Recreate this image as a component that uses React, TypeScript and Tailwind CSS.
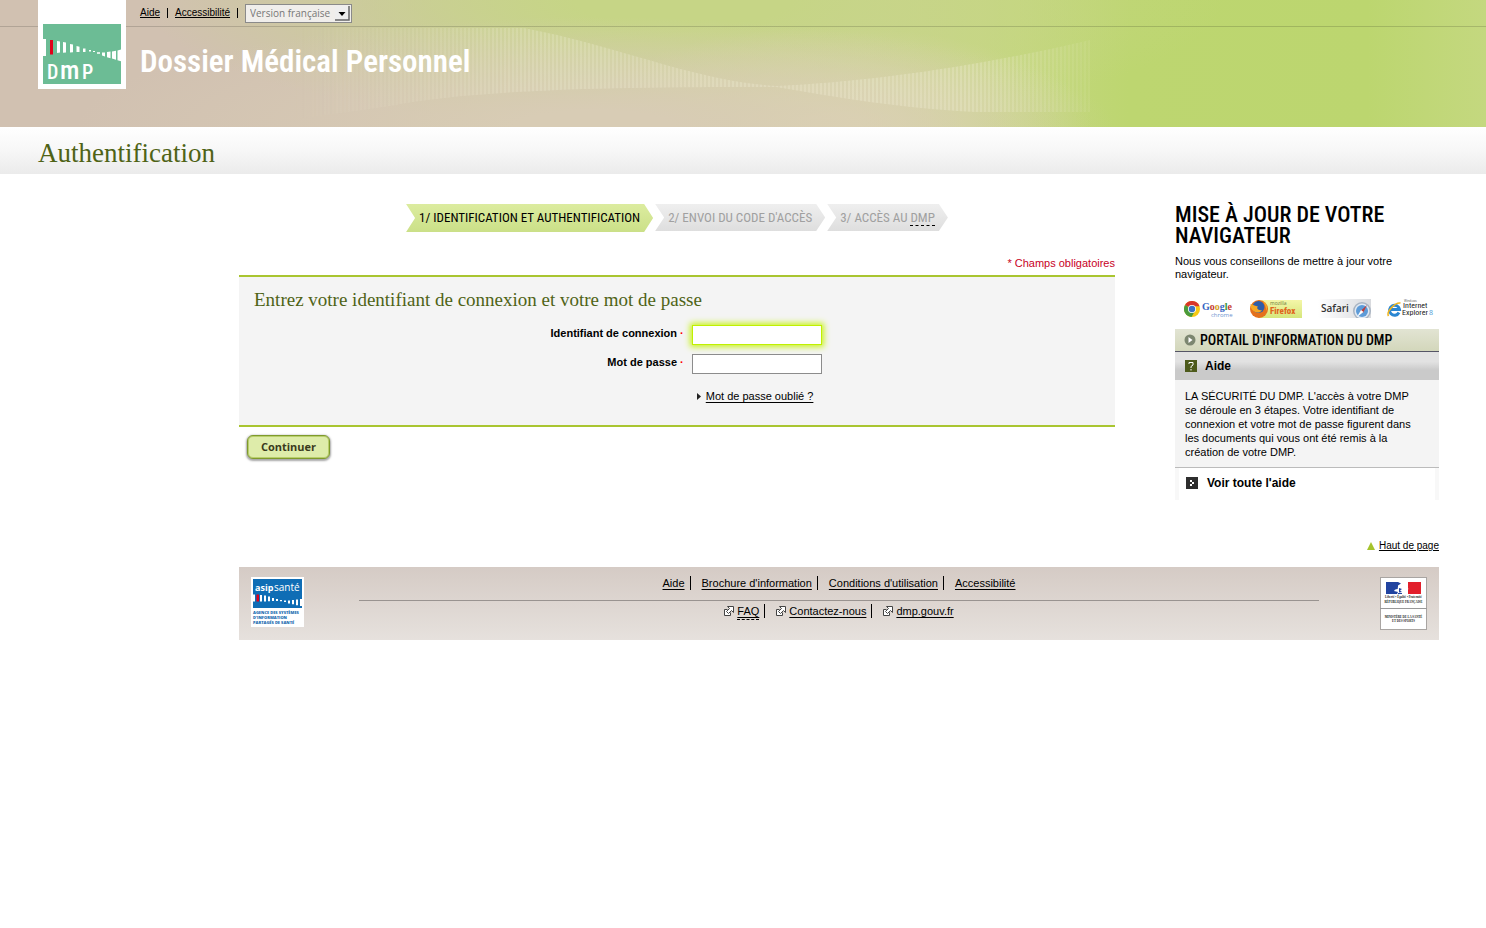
import React, { useState } from 'react';

const steps = [
  { label: '1/ IDENTIFICATION ET AUTHENTIFICATION', active: true },
  { label: "2/ ENVOI DU CODE D'ACCÈS", active: false },
  { label: '3/ ACCÈS AU ', abbr: 'DMP', active: false },
];

const footerLinks = ['Aide', "Brochure d'information", "Conditions d'utilisation", 'Accessibilité'];
const externalLinks = ['FAQ', 'Contactez-nous', 'dmp.gouv.fr'];

const HeaderWave = () => (
  <svg className="absolute inset-y-0 left-0 h-full w-[1100px]" viewBox="0 0 1100 127" aria-hidden="true">
    <defs>
      <pattern id="stripes" width="4" height="127" patternUnits="userSpaceOnUse">
        <rect width="4" height="127" fill="#f6f3dc" fillOpacity="0.3" />
        <rect width="2" height="127" fill="#f6f3dc" fillOpacity="0.7" />
      </pattern>
      <linearGradient id="waveFade" x1="0" x2="1">
        <stop offset="0" stopColor="#fff" stopOpacity="0" />
        <stop offset="0.3" stopColor="#fff" stopOpacity="0.35" />
        <stop offset="0.85" stopColor="#fff" stopOpacity="0.4" />
        <stop offset="1" stopColor="#fff" stopOpacity="0.12" />
      </linearGradient>
      <mask id="waveMask">
        <path
          d="M290 28H524C620 46 690 80 776 86C870 82 980 66 1090 40V112H975C900 108 840 98 776 87C640 87 480 88 390 106C350 112 320 116 290 120Z"
          fill="url(#waveFade)"
        />
      </mask>
    </defs>
    <rect width="1100" height="127" fill="url(#stripes)" mask="url(#waveMask)" />
  </svg>
);

const DmpLogo = () => (
  <svg className="block h-[60px] w-[78px]" viewBox="0 0 78 60" role="img" aria-label="DMP">
    <rect width="78" height="60" fill="#6cbc95" />
    <g fill="#fff">
      <path d="M0 15h3v17H0z" />
      <path d="M14 17l3 .5v11l-3 .5zM20 18l3 .5v10l-3 .3zM27 20l3 .6v7.600l-3 .2zM33.500 22l3 .8v5.200h-3zM40 24.500h2.500V28H40zM46 26h2v1.500h-2zM50 27h2v1h-2zM54 28.200h3v1.600h-3zM59 28.600l3-.2v4l-3-.9zM64 28l3.500-.4v6.600l-3.500-1zM69 27.500l4-.8v9L69 34.600zM74.500 26.400L78 25.500v11.700l-3.500-1z" />
    </g>
    <path d="M7 16h3v14.500H7z" fill="#e2001a" />
    <g fill="#fff" fontFamily="Roboto Condensed, Open Sans, sans-serif" fontWeight="500">
      <text x="4" y="55" fontSize="20">D</text>
      <text x="17" y="55" fontSize="26">m</text>
      <text x="39" y="55" fontSize="20">P</text>
    </g>
  </svg>
);

const ChromeLogo = () => (
  <svg className="h-[20px] w-[50px]" viewBox="0 0 50 20" role="img" aria-label="Google Chrome">
    <circle cx="8" cy="10" r="8" fill="#f6c915" />
    <path d="M8 10L1 6A8 8 0 0 1 15.500 7.200H8z" fill="#d8362a" />
    <path d="M8 10L1 6A8 8 0 0 0 7.500 18l3.500-6z" fill="#4a9b3c" />
    <circle cx="8" cy="10" r="4" fill="#fff" />
    <circle cx="8" cy="10" r="3.200" fill="#3b73c4" />
    <text y="11" fontFamily="Liberation Serif, serif" fontSize="10" fontWeight="700">
      <tspan x="18" fill="#3464c4">G</tspan><tspan fill="#c43a30">o</tspan><tspan fill="#d2a21c">o</tspan><tspan fill="#3464c4">g</tspan><tspan fill="#3c963c">l</tspan><tspan fill="#c43a30">e</tspan>
    </text>
    <text x="27" y="18" fontFamily="Open Sans, sans-serif" fontSize="6" fill="#6f93cf">chrome</text>
  </svg>
);

const FirefoxLogo = () => (
  <svg className="h-[20px] w-[53px]" viewBox="0 0 53 20" role="img" aria-label="Mozilla Firefox">
    <defs>
      <linearGradient id="ffBg" x2="0" y2="1">
        <stop offset="0" stopColor="#f4f6a8" />
        <stop offset="1" stopColor="#d6e67c" />
      </linearGradient>
    </defs>
    <rect x="8" y="1" width="44" height="18" fill="url(#ffBg)" />
    <circle cx="9" cy="10" r="9" fill="#e4701c" />
    <circle cx="8.500" cy="8" r="6" fill="#2f5da8" />
    <path d="M.5 5C4 6 5 7 8 7.500C6 9 8 12 12 11C9 16 3 13 1 9zM12 1.500C17 4 18 8 16.500 12C16 8 15 5 12 1.500z" fill="#f7a823" />
    <text x="20" y="6" fontFamily="Open Sans, sans-serif" fontSize="5" fill="#6c7a3a">mozilla</text>
    <text x="20" y="15" fontFamily="Roboto Condensed, Open Sans, sans-serif" fontSize="9" fontWeight="800" fill="#e0661c">Firefox</text>
  </svg>
);

const SafariLogo = () => (
  <svg className="h-[20px] w-[53px]" viewBox="0 0 53 20" role="img" aria-label="Safari">
    <defs>
      <linearGradient id="sfBg">
        <stop offset="0" stopColor="#fff" />
        <stop offset="1" stopColor="#d8dade" />
      </linearGradient>
      <clipPath id="sfClip"><path d="M0 0h53v19H0z" /></clipPath>
    </defs>
    <rect width="53" height="19" fill="url(#sfBg)" />
    <g clipPath="url(#sfClip)">
      <circle cx="44" cy="12" r="9" fill="#a9b4c2" />
      <circle cx="44" cy="12" r="7.500" fill="#dfe9f4" />
      <circle cx="44" cy="12" r="6" fill="#5d9bd8" />
      <path d="M49 6l-4 8-2.500-2z" fill="#c23b34" />
      <path d="M39 18l4-7 2.500 2z" fill="#fff" />
    </g>
    <text x="3" y="13" fontFamily="Open Sans, sans-serif" fontSize="10" fontWeight="600" fill="#333">Safari</text>
  </svg>
);

const IeLogo = () => (
  <svg className="h-[20px] w-[47px]" viewBox="0 0 47 20" role="img" aria-label="Internet Explorer 8">
    <path d="M12 13.500A5 5 0 1 1 12.500 10.500H4" fill="none" stroke="#2b87d3" strokeWidth="3" />
    <path d="M1.500 17C-1 13 8 3 13.500 4" fill="none" stroke="#f2b51d" strokeWidth="1.500" />
    <text x="17" y="3" fontFamily="Open Sans, sans-serif" fontSize="3" fill="#555">Windows</text>
    <text x="16" y="9" fontFamily="Roboto Condensed, Open Sans, sans-serif" fontSize="8" fill="#222">Internet</text>
    <text x="15" y="16" fontFamily="Roboto Condensed, Open Sans, sans-serif" fontSize="8" fill="#222">Explorer</text>
    <text x="42" y="16" fontFamily="Open Sans, sans-serif" fontSize="7" fill="#4b9bd6">8</text>
  </svg>
);

const AsipLogo = () => (
  <svg className="h-[50px] w-[53px]" viewBox="0 0 53 50" role="img" aria-label="ASIP Santé">
    <rect width="53" height="50" fill="#fff" />
    <rect x="2" y="2" width="49" height="29" fill="#0f6db5" />
    <text x="4" y="14" fontFamily="Open Sans, sans-serif" fontSize="9" fontWeight="700" fill="#fff">asip</text>
    <text x="23" y="14" fontFamily="Open Sans, sans-serif" fontSize="10" fill="#fff">santé</text>
    <path d="M2 17.500h2v7H2zM9 18h2v6.500H9zM13 18.500h2v6h-2zM17 19.500h2v4.700h-2zM21 21h2v3h-2zM25 22h2v2h-2zM29 23h2v1.200h-2zM33 23.600h2V25h-2zM37 23.400h2v3h-2zM41 23h2v4.300h-2zM45 22.500h2v5.700h-2zM49 22h2v7h-2z" fill="#fff" />
    <path d="M5.500 17.500h2.500v7H5.500z" fill="#e2001a" />
    <g fontFamily="Open Sans, sans-serif" fontSize="4" fontWeight="800" fill="#1a6bb0">
      <text x="2" y="37">AGENCE DES SYSTÈMES</text>
      <text x="2" y="42">D'INFORMATION</text>
      <text x="2" y="47">PARTAGÉS DE SANTÉ</text>
    </g>
  </svg>
);

const MarianneLogo = () => (
  <svg className="h-[53px] w-[47px]" viewBox="0 0 47 53" role="img" aria-label="République Française">
    <rect x="0.500" y="0.500" width="46" height="52" fill="#fff" stroke="#a9a5a2" />
    <path d="M6 5h12v12H6z" fill="#2244a0" />
    <path d="M28 5h13v12H28z" fill="#e21f2b" />
    <path d="M18 5h5c3 1 4 3 4 5l1.500 2-1.500 1v2.500L24 17h-6z" fill="#fff" />
    <path d="M14 14c1-2 3-2 5-2l-2-1 3-1-2-1.500c2 0 4 0 5 2l-1 2 1 2-3 1.500 1 1h-4l1-2z" fill="#fff" />
    <path d="M18 5l3 1.500-3 2zM19 11l3 1-2 1.500 2 1.500-3 .5zM18 16h4v1h-4z" fill="#2244a0" />
    <path d="M0 31.500h47" stroke="#999" />
    <g fontFamily="Liberation Serif, serif" fill="#222" textAnchor="middle">
      <text x="23.500" y="21" fontSize="3" fontWeight="700">Liberté • Égalité • Fraternité</text>
      <text x="23.500" y="26" fontSize="3" fontWeight="700">RÉPUBLIQUE FRANÇAISE</text>
      <text x="23.500" y="41" fontSize="3" fontWeight="700">MINISTÈRE DE LA SANTÉ</text>
      <text x="23.500" y="45" fontSize="3" fontWeight="700">ET DES SPORTS</text>
    </g>
  </svg>
);

const ExternalIcon = () => (
  <svg className="mr-[3px] h-[10px] w-[10px]" viewBox="0 0 10 10" fill="#fff" stroke="#444" aria-hidden="true">
    <path d="M3.500 3.500h-3v6h6v-3" />
    <path d="M3.500 .5h6v6l-2-2-3 3-2-2 3-3z" />
  </svg>
);

const App: React.FC = () => {
  const [login, setLogin] = useState('');
  const [password, setPassword] = useState('');

  return (
    <div id="top" className="bg-white font-['Liberation_Sans',Arial,sans-serif] text-[11px] leading-[14px] text-black">
      <header className="relative h-[127px] bg-[radial-gradient(ellipse_520px_110px_at_40%_100%,#d8ccb5_15%,#d8ccb500_100%),radial-gradient(ellipse_260px_100px_at_56%_100%,#dcd5b0_10%,#dcd5b000_100%),radial-gradient(ellipse_540px_130px_at_46%_0%,#c6d586_20%,#c6d58600_100%),linear-gradient(to_right,#d1c1b1_0%,#d1c1b1_24%,#ccd295_58%,#c5d780_68%,#bdd670_76%,#bcd66f_92%,#c4d87f_100%)]">
        <HeaderWave />
        <div className="relative flex">
          <div className="relative z-10 ml-[38px] flex h-[89px] w-[88px] items-end bg-white p-[5px]">
            <DmpLogo />
          </div>
          <div className="-ml-[126px] h-[27px] flex-1 border-b border-[#00000026] pl-[140px]">
            <div className="flex h-[26px] items-center text-[10px]">
              <a href="#aide" className="underline">Aide</a>
              <span className="mx-[7px] h-[10px] w-px bg-black" />
              <a href="#accessibilite" className="underline">Accessibilité</a>
              <span className="mx-[7px] h-[10px] w-px bg-black" />
              <div className="relative">
                <select
                  aria-label="Langue"
                  className="block h-[19px] w-[107px] appearance-none border border-[#8a8a8a] bg-[#f0eeeb] pl-1 font-['Open_Sans',sans-serif] text-[10px] text-[#777]"
                >
                  <option>Version française</option>
                  <option>English version</option>
                </select>
                <svg className="pointer-events-none absolute right-[2px] top-[2px] h-[15px] w-[15px]" viewBox="0 0 15 15" aria-hidden="true">
                  <rect width="15" height="15" fill="#eee" />
                  <path d="M0 14h14V0" fill="none" stroke="#666" strokeWidth="1.500" />
                  <path d="M3.500 6h7l-3.500 4z" />
                </svg>
              </div>
            </div>
            <p className="mt-[19px] w-[400px] font-['Roboto_Condensed','Open_Sans',sans-serif] text-[31px] font-semibold leading-[34px] text-white">
              Dossier Médical Personnel
            </p>
          </div>
        </div>
      </header>

      <div className="flex h-[47px] items-center bg-linear-to-b from-white via-[#f7f7f7] to-[#ebebeb] pl-[38px] pt-1">
        <h1 className="font-['Liberation_Serif',serif] text-[27px] leading-8 text-[#4f6316]">Authentification</h1>
      </div>

      <main className="flex gap-[60px] pl-[239px] pr-[47px] pt-[30px]">
        <section className="min-w-0 flex-1">
          <ol className="flex h-7 justify-center gap-[2px] font-['Roboto_Condensed','Open_Sans',sans-serif] text-[13px] leading-[27px]">
            {steps.map((step) => (
              <li
                key={step.label}
                className={`px-[13px] [clip-path:polygon(0_0,calc(100%-9px)_0,100%_50%,calc(100%-9px)_100%,0_100%,9px_50%)] ${
                  step.active
                    ? 'h-7 bg-linear-to-b from-[#dcec9f] to-[#cbe088] text-black'
                    : 'h-[27px] bg-linear-to-b from-[#efefef] to-[#dedede] text-[#a0a0a0]'
                }`}
              >
                {step.label}
                {step.abbr && <abbr title="Dossier Médical Personnel" className="border-b border-dashed border-black no-underline">{step.abbr}</abbr>}
              </li>
            ))}
          </ol>

          <p className="mt-6 text-right text-[#c8001e]">* Champs obligatoires</p>

          <form onSubmit={(e) => e.preventDefault()}>
            <div className="mt-[5px] border-y-2 border-[#a9c530] bg-[#f4f4f4] pb-[22px] pt-[11px]">
              <h2 className="pl-[15px] font-['Liberation_Serif',serif] text-[19px] leading-6 text-[#4f6316]">
                Entrez votre identifiant de connexion et votre mot de passe
              </h2>
              <div className="mt-[13px] grid grid-cols-[51%_1fr] gap-x-[6px] gap-y-[9px]">
                <label htmlFor="login" className="pr-[2px] pt-px text-right font-bold">
                  Identifiant de connexion <span className="text-[#ff0000]">·</span>
                </label>
                <input
                  id="login"
                  type="text"
                  value={login}
                  onChange={(e) => setLogin(e.target.value)}
                  className="h-5 w-[130px] border border-[#c0f000] bg-white px-1 shadow-[0_0_6px_2px_#c8f21c] outline-none"
                />
                <label htmlFor="password" className="pr-[2px] pt-px text-right font-bold">
                  Mot de passe <span className="text-[#ff0000]">·</span>
                </label>
                <input
                  id="password"
                  type="password"
                  value={password}
                  onChange={(e) => setPassword(e.target.value)}
                  className="h-5 w-[130px] border border-[#8c8c8c] bg-white px-1 outline-none"
                />
                <div className="col-start-2 flex items-center pl-[5px] pt-[6px]">
                  <svg className="mr-[5px] h-[7px] w-1" viewBox="0 0 4 7" aria-hidden="true"><path d="M0 0l4 3.500L0 7z" fill="#222" /></svg>
                  <a href="#oubli" className="underline underline-offset-2">Mot de passe oublié ?</a>
                </div>
              </div>
            </div>
            <button
              type="submit"
              className="ml-2 mt-2 block h-6 w-[83px] rounded-md border border-[#7f9a2c] bg-[#deecaa] font-['Open_Sans',sans-serif] text-[11px] font-bold text-[#3a3a1c] shadow-[inset_0_0_0_1px_#b9cf6c,0_1px_2px_1px_#00000059]"
            >
              Continuer
            </button>
          </form>
        </section>

        <aside className="w-[264px] shrink-0">
          <h2 className="font-['Roboto_Condensed','Open_Sans',sans-serif] text-[22px] font-medium leading-[21px]">
            MISE À JOUR DE VOTRE NAVIGATEUR
          </h2>
          <p className="mt-[9px] leading-[13px]">Nous vous conseillons de mettre à jour votre navigateur.</p>
          <div className="mt-[18px] flex justify-between pl-[9px] pr-[5px]">
            <ChromeLogo />
            <FirefoxLogo />
            <SafariLogo />
            <IeLogo />
          </div>
          <a
            href="#portail"
            className="mt-[10px] flex h-[23px] items-center gap-1 border-b border-[#555566] bg-linear-to-b from-[#e2e4d3] to-[#d3d7bb] pl-[9px] font-['Roboto_Condensed','Open_Sans',sans-serif] text-[14px] font-medium"
          >
            <svg className="h-[12px] w-[12px]" viewBox="0 0 12 12" aria-hidden="true">
              <circle cx="6" cy="6" r="5.500" fill="#7c8670" />
              <path d="M4.500 3l4 3-4 3z" fill="#fff" />
            </svg>
            PORTAIL D'INFORMATION DU DMP
          </a>
          <h3 className="flex h-7 items-center gap-2 bg-linear-to-b from-[#e2e2e2] from-35% to-[#cacaca] to-65% pl-[10px] text-[12px] font-bold">
            <svg className="h-[12px] w-[12px]" viewBox="0 0 12 12" aria-hidden="true">
              <rect width="12" height="12" fill="#4d5a1b" />
              <path d="M4 4V2.500h4V5L6 6.500V8M6 9v1.500" fill="none" stroke="#fff" />
            </svg>
            Aide
          </h3>
          <p className="border-b border-[#bbb] bg-[#f4f4f4] pb-2 pl-[10px] pr-4 pt-[9px]">
            LA SÉCURITÉ DU DMP. L'accès à votre DMP se déroule en 3 étapes. Votre identifiant de connexion et votre mot de passe figurent dans les documents qui vous ont été remis à la création de votre DMP.
          </p>
          <a href="#toute-aide" className="flex h-8 items-center gap-[9px] border-x-4 border-[#f8f8f8] pb-[2px] pl-[7px] text-[12px] font-bold">
            <svg className="h-[12px] w-[12px]" viewBox="0 0 12 12" aria-hidden="true">
              <rect width="12" height="12" fill="#2e2e2e" />
              <path d="M4 3h2v2h2v2H6v2H4V7h2V5H4z" fill="#fff" />
            </svg>
            Voir toute l'aide
          </a>
        </aside>
      </main>

      <div className="mt-[39px] flex items-center justify-end pr-[47px] text-[10px]">
        <svg className="mr-1 h-2 w-2" viewBox="0 0 8 8" aria-hidden="true"><path d="M4 0l4 8H0z" fill="#a5c32c" /></svg>
        <a href="#top" className="underline">Haut de page</a>
      </div>

      <footer className="ml-[239px] mr-[47px] mt-[14px] flex h-[73px] bg-linear-to-b from-[#d5cbc5] to-[#e6e1dd]">
        <div className="w-[120px] pl-3 pt-[10px]">
          <AsipLogo />
        </div>
        <nav className="flex-1">
          <ul className="flex h-[34px] items-center justify-center border-b border-[#999390] pb-[2px]">
            {footerLinks.map((label) => (
              <li key={label} className="ml-[11px] border-r border-black pr-[5px] first:ml-0 last:border-r-0 last:pr-0">
                <a href="#footer" className="underline underline-offset-2">{label}</a>
              </li>
            ))}
          </ul>
          <ul className="flex justify-center pt-[3px]">
            {externalLinks.map((label) => (
              <li key={label} className="ml-[11px] flex items-center border-r border-black pr-[5px] first:ml-0 last:border-r-0 last:pr-0">
                <ExternalIcon />
                <a href="#externe" className="underline underline-offset-2">
                  {label === 'FAQ' ? <abbr title="Foire aux questions" className="border-b border-dashed border-black pb-[2px] no-underline">FAQ</abbr> : label}
                </a>
              </li>
            ))}
          </ul>
        </nav>
        <div className="flex w-[120px] justify-end pr-3 pt-[10px]">
          <MarianneLogo />
        </div>
      </footer>
    </div>
  );
};

export default App;
